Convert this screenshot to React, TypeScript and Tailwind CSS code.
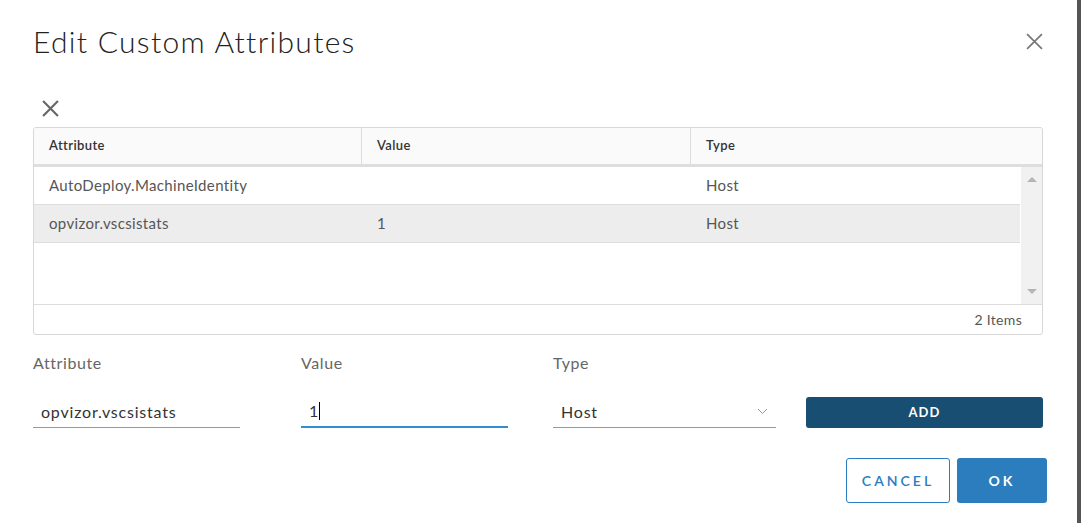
import React from "react";

const font = { fontFamily: "Lato, 'Open Sans', sans-serif" };

const rows = [
  { attr: "AutoDeploy.MachineIdentity", value: "", type: "Host", selected: false },
  { attr: "opvizor.vscsistats", value: "1", type: "Host", selected: true },
];

const CloseIcon = ({ size, stroke, color }: { size: number; stroke: number; color: string }) => (
  <svg width={size} height={size} viewBox="0 0 16 16" fill="none">
    <path d="M1 1L15 15M15 1L1 15" stroke={color} strokeWidth={stroke} />
  </svg>
);

export default function App() {
  return (
    <div className="flex h-[523px] w-[1081px] overflow-hidden bg-white" style={font}>
      <div className="flex w-[1077px] flex-col bg-white">
        {/* Header */}
        <div className="flex h-[88px] items-start justify-between pl-[33px] pr-[34px] pt-[23px]">
          <h1 className="text-[30px] font-light leading-[36px] tracking-[1.3px] text-[#222]">Edit Custom Attributes</h1>
          <div className="pt-[10px]">
            <CloseIcon size={17} stroke={1.6} color="#777" />
          </div>
        </div>

        {/* Remove icon */}
        <div className="flex h-[39px] items-start pl-[42px] pt-[12px]">
          <CloseIcon size={17} stroke={2} color="#666" />
        </div>

        {/* Grid */}
        <div className="ml-[33px] w-[1010px] overflow-hidden rounded-[3px] border border-[#d7d7d7]">
          <div className="flex h-[39px] items-center border-b-[3px] border-[#dedede] bg-[#fafafa] text-[13px] font-semibold tracking-[0.4px] text-[#333]">
            <div className="flex h-full w-[328px] items-center border-r border-[#ddd] pl-[15px]">Attribute</div>
            <div className="flex h-full w-[329px] items-center border-r border-[#ddd] pl-[15px]">Value</div>
            <div className="flex h-full flex-1 items-center pl-[15px]">Type</div>
          </div>
          <div className="flex h-[137px]">
            <div className="flex w-[986px] flex-col">
              {rows.map((r) => (
                <div
                  key={r.attr}
                  className={`flex h-[38px] items-center border-b border-[#ddd] text-[15px] tracking-[0.35px] text-[#565656] ${r.selected ? "bg-[#ededed]" : "bg-white"}`}
                >
                  <div className="w-[328px] pl-[15px]">{r.attr}</div>
                  <div className="w-[329px] pl-[15px]">{r.value}</div>
                  <div className="flex-1 pl-[15px]">{r.type}</div>
                </div>
              ))}
            </div>
            <div className="ml-[1px] flex w-[21px] flex-col items-center justify-between bg-[#f1f1f1] py-[10px]">
              <div className="h-0 w-0 border-x-[5px] border-b-[5px] border-x-transparent border-b-[#b5b5b5]" />
              <div className="h-0 w-0 border-x-[5px] border-t-[5px] border-x-transparent border-t-[#b5b5b5]" />
            </div>
          </div>
          <div className="flex h-[30px] items-center justify-end border-t border-[#ddd] pr-[20px] text-[14px] tracking-[0.3px] text-[#565656]">
            2 Items
          </div>
        </div>

        {/* Form */}
        <div className="flex pl-[33px] pt-[18px]">
          <div className="w-[268px]">
            <div className="text-[16px] leading-[20px] tracking-[0.6px] text-[#666]">Attribute</div>
            <div className="mt-[23px] flex h-[32px] w-[207px] items-center border-b border-[#999] pl-[8px] text-[16px] tracking-[0.8px] text-[#333]">
              opvizor.vscsistats
            </div>
          </div>
          <div className="w-[252px]">
            <div className="text-[16px] leading-[20px] tracking-[0.6px] text-[#666]">Value</div>
            <div className="mt-[23px] flex h-[32px] w-[207px] items-center border-b-2 border-[#2f8fcf] pl-[8px] text-[16px] text-[#333]">
              1<span className="ml-[1px] h-[18px] w-[1px] bg-black" />
            </div>
          </div>
          <div className="w-[253px]">
            <div className="text-[16px] leading-[20px] tracking-[0.6px] text-[#666]">Type</div>
            <div className="mt-[23px] flex h-[32px] w-[223px] items-center justify-between border-b border-[#999] pl-[8px] pr-[8px] text-[16px] tracking-[0.8px] text-[#333]">
              Host
              <svg width="11" height="7" viewBox="0 0 11 7" fill="none">
                <path d="M1 1L5.5 5.5L10 1" stroke="#999" strokeWidth="1" />
              </svg>
            </div>
          </div>
          <div className="pt-[44px]">
            <button className="flex h-[31px] w-[237px] items-center justify-center rounded-[3px] bg-[#174e72] text-[13px] font-bold tracking-[1px] text-white">
              ADD
            </button>
          </div>
        </div>

        {/* Footer */}
        <div className="flex justify-end gap-[7px] pr-[30px] pt-[30px]">
          <button className="flex h-[45px] w-[104px] items-center justify-center rounded-[3px] border border-[#2b7cc0] bg-white text-[14px] font-semibold tracking-[3px] text-[#2b7cc0]">
            CANCEL
          </button>
          <button className="flex h-[45px] w-[90px] items-center justify-center rounded-[3px] bg-[#2b7dbd] text-[14px] font-bold tracking-[3px] text-white">
            OK
          </button>
        </div>
      </div>
      <div className="w-[4px] bg-[#555]" />
    </div>
  );
}
